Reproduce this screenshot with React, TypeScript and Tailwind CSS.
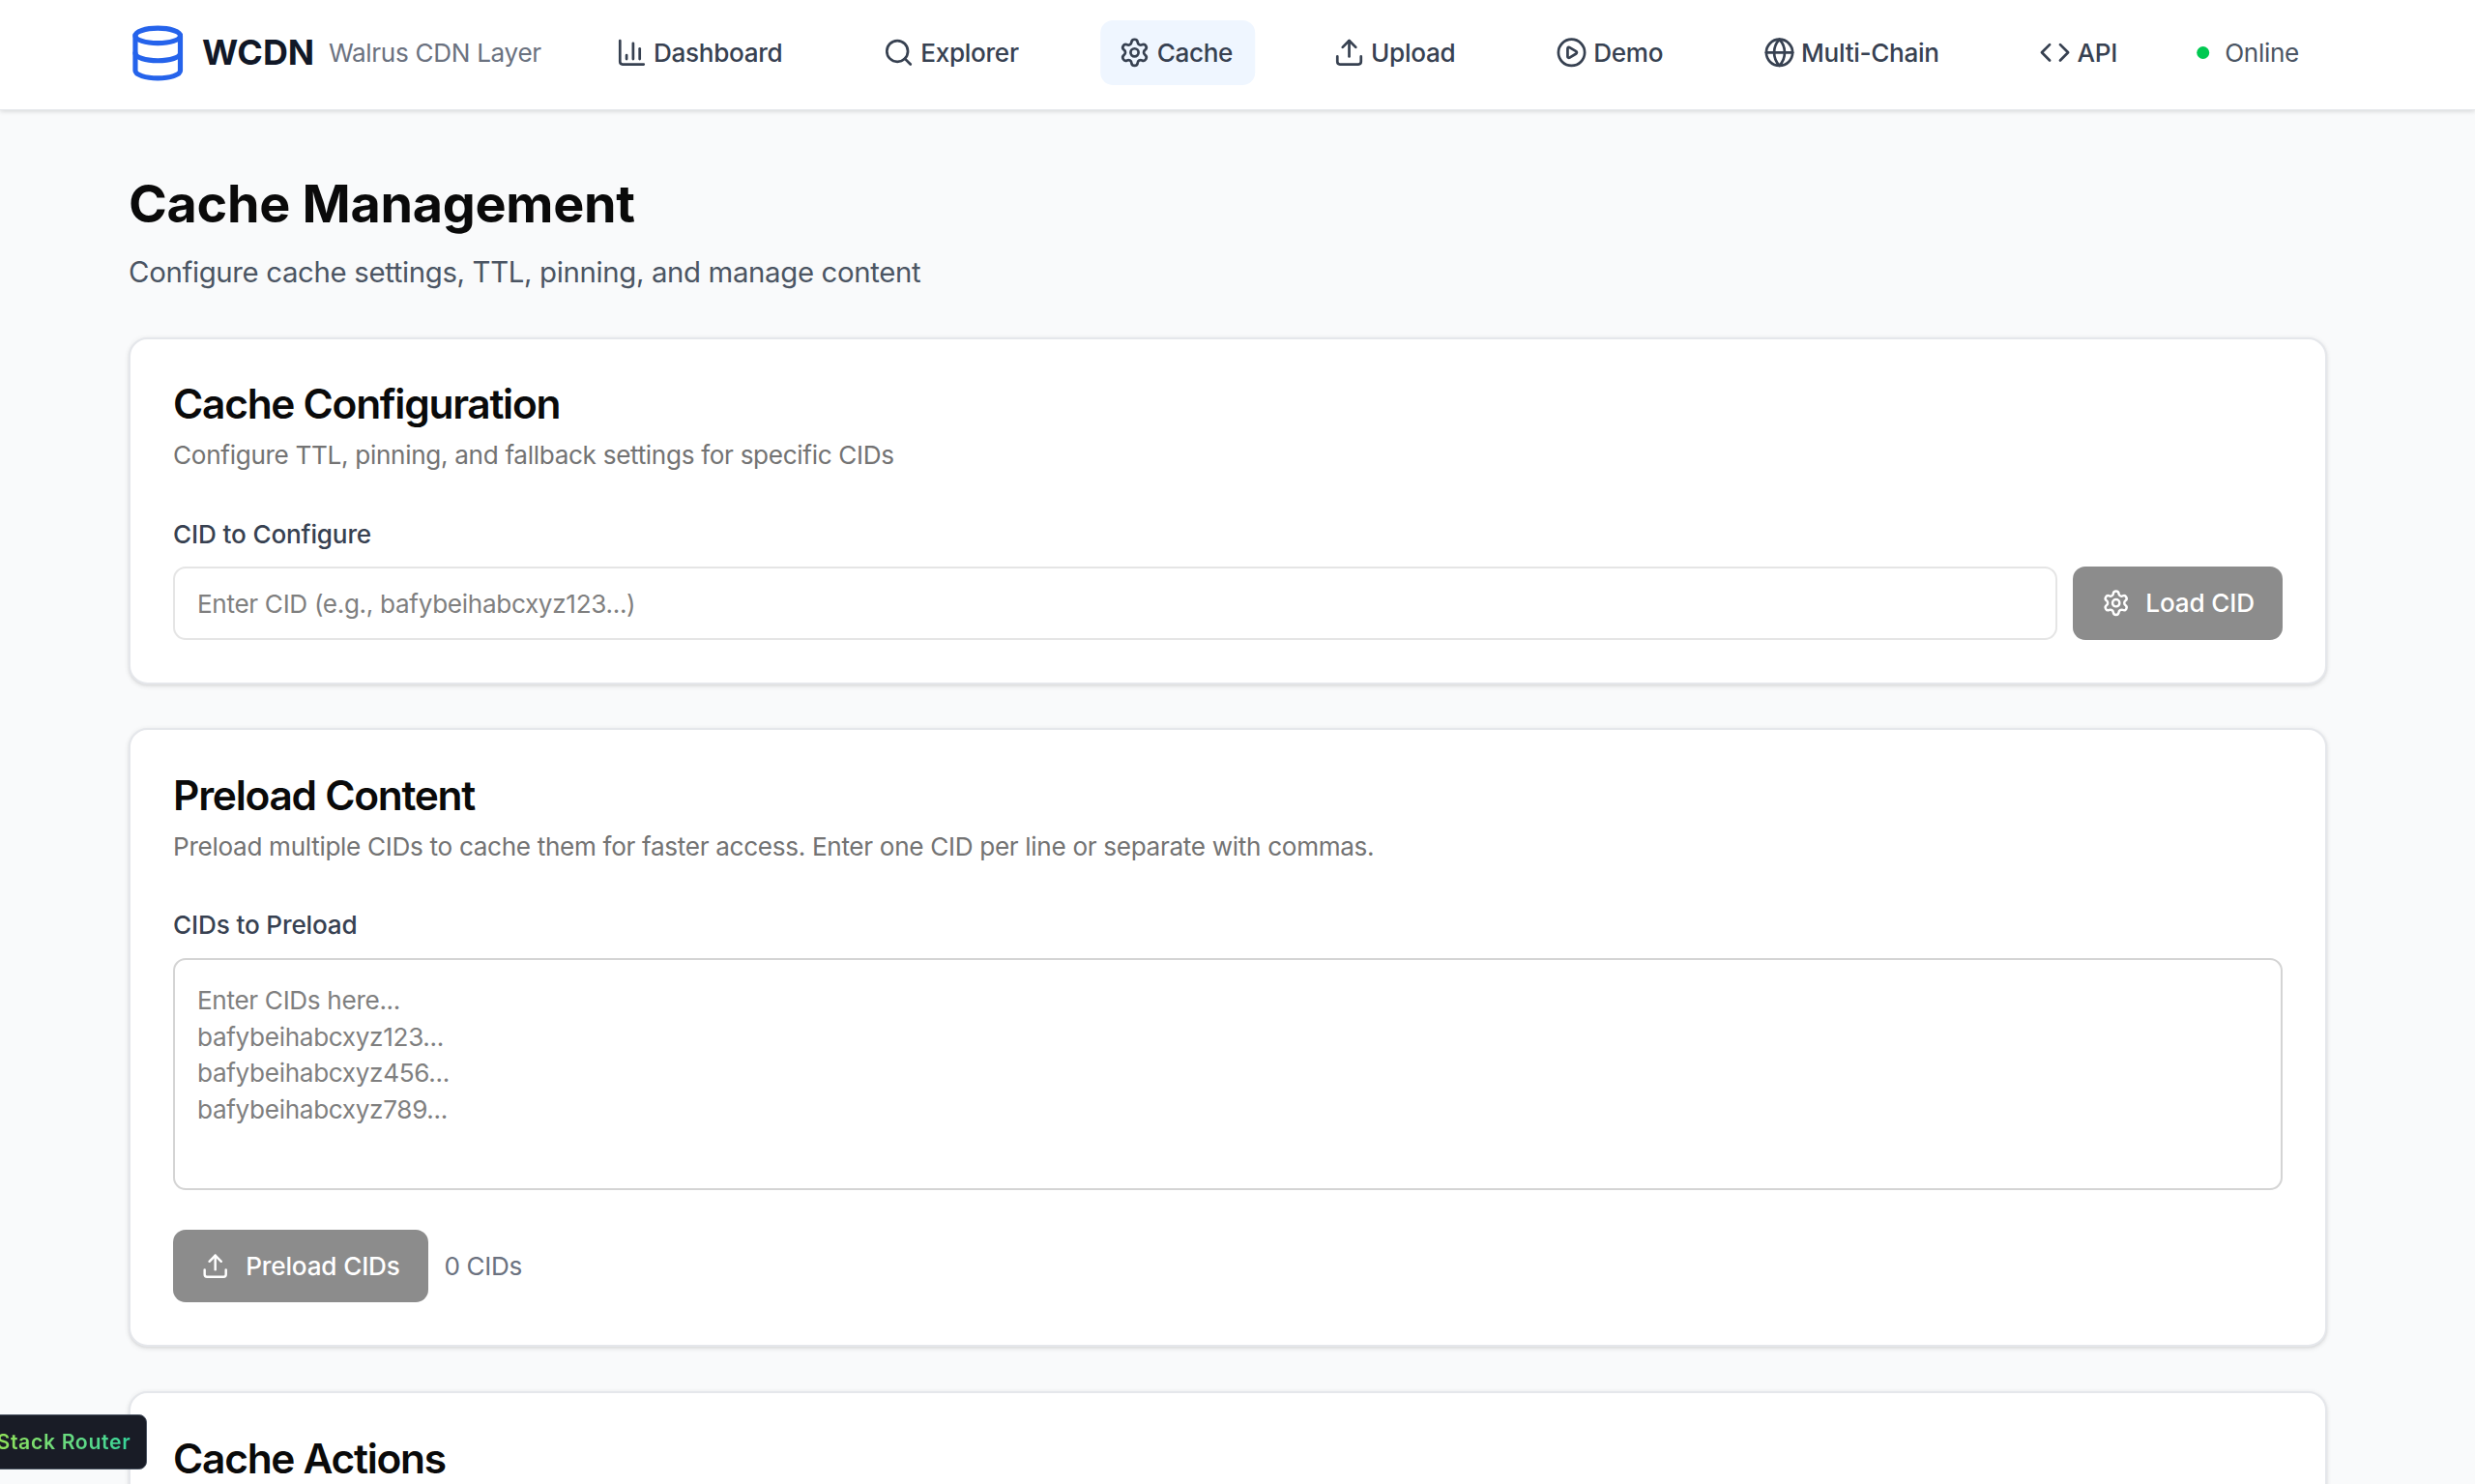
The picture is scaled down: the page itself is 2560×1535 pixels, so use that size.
import React from "react";
import { ChartColumn, Database, Search, Settings, Upload, CirclePlay, Globe, Code } from "lucide-react";

const navItems = [
  { label: "Dashboard", Icon: ChartColumn, active: false },
  { label: "Explorer", Icon: Search, active: false },
  { label: "Cache", Icon: Settings, active: true },
  { label: "Upload", Icon: Upload, active: false },
  { label: "Demo", Icon: CirclePlay, active: false },
  { label: "Multi-Chain", Icon: Globe, active: false },
  { label: "API", Icon: Code, active: false },
];

function CardHead({ title, desc }: { title: string; desc?: string }) {
  return (
    <div>
      <h2 className="text-[26px] leading-[26px] font-semibold tracking-[-0.03em] text-[#0a0a0a]">{title}</h2>
      {desc ? <p className="mt-[7px] text-base leading-6 tracking-[-0.012em] text-[#737373]">{desc}</p> : null}
    </div>
  );
}

function GrayButton({ label, Icon }: { label: string; Icon: typeof Upload }) {
  return (
    <button className="flex h-[46px] items-center gap-[10px] rounded-lg bg-[#8c8c8c] px-[18px] text-base font-medium tracking-[-0.006em] text-white">
      <Icon size={18} />
      {label}
    </button>
  );
}

export default function App() {
  return (
    <div className="relative h-[941px] overflow-hidden bg-[#f9fafb] font-['Inter',sans-serif] [zoom:1.6327]">
      <header className="h-[70px] border-b border-[#e5e7eb] bg-white pt-[13px] shadow-[0_1px_3px_rgba(0,0,0,0.14)]">
        <div className="mx-auto flex w-[1392px] -translate-x-[6px] items-center justify-between">
          <div className="flex items-center">
            <Database size={38} className="ml-[-1px] text-[#2563eb]" />
            <span className="ml-[9px] text-[22px] font-bold leading-[28px] text-[#111827]">WCDN</span>
            <span className="ml-[9px] text-base tracking-[-0.012em] text-[#6b7280]">Walrus CDN Layer</span>
          </div>
          <nav className="flex items-center gap-[37.6px] pr-[17.5px]">
            {navItems.map(({ label, Icon, active }) => (
              <a
                key={label}
                className={
                  active
                    ? "flex h-[41px] items-center gap-1 rounded-lg bg-[#eff6ff] pl-3 pr-[14px] text-base font-medium tracking-[-0.012em] text-[#374151]"
                    : "flex h-[41px] items-center gap-1 rounded-lg pl-3 pr-[14px] text-base font-medium tracking-[-0.012em] text-[#374151]"
                }
              >
                <Icon size={20} />
                {label}
              </a>
            ))}
            <div className="ml-[-1.5px] flex items-center gap-[10px] text-base tracking-[-0.012em] text-[#4b5563]">
              <span className="h-2 w-2 rounded-full bg-green-500" />
              Online
            </div>
          </nav>
        </div>
      </header>

      <main className="pr-3 pt-[39px]">
        <div className="mx-auto w-[1393px]">
          <h1 className="text-[33px] leading-10 font-bold tracking-[-0.005em] text-[#0a0a0a]">Cache Management</h1>
          <p className="mt-[9.5px] text-lg tracking-[-0.012em] text-[#4b5563]">Configure cache settings, TTL, pinning, and manage content</p>

          <section className="mt-[27.5px] rounded-xl border-[1.25px] border-[#e5e7eb] bg-white px-[27px] pb-[27px] pt-7 shadow-sm">
            <CardHead title="Cache Configuration" desc="Configure TTL, pinning, and fallback settings for specific CIDs" />
            <label className="mt-[26px] block text-base font-medium leading-6 tracking-[-0.006em] text-[#374151]">CID to Configure</label>
            <div className="mt-[9px] flex gap-[10px]">
              <input
                className="h-[46px] flex-1 rounded-lg border-[1.25px] border-[#e5e5e5] bg-white px-[14px] text-base tracking-[-0.012em] outline-none placeholder:text-[#7f7f7f]"
                placeholder="Enter CID (e.g., bafybeihabcxyz123...)"
              />
              <GrayButton label="Load CID" Icon={Settings} />
            </div>
          </section>

          <section className="mt-7 rounded-xl border-[1.25px] border-[#e5e7eb] bg-white px-[27px] pb-[27px] pt-[28.5px] shadow-sm">
            <CardHead title="Preload Content" desc="Preload multiple CIDs to cache them for faster access. Enter one CID per line or separate with commas." />
            <label className="mt-[26px] block text-base font-medium leading-6 tracking-[-0.006em] text-[#374151]">CIDs to Preload</label>
            <textarea
              className="mt-[9px] block h-[147px] w-full resize-none rounded-lg border-[1.25px] border-[#d4d4d4] bg-white px-[14px] py-[14px] text-base leading-[23px] tracking-[-0.012em] outline-none placeholder:text-[#7f7f7f]"
              placeholder={"Enter CIDs here...\nbafybeihabcxyz123...\nbafybeihabcxyz456...\nbafybeihabcxyz789..."}
            />
            <div className="mt-[25px] flex items-center gap-[10px]">
              <GrayButton label="Preload CIDs" Icon={Upload} />
              <span className="text-base tracking-[-0.012em] text-[#6b7280]">0 CIDs</span>
            </div>
          </section>

          <section className="mt-7 rounded-xl border-[1.25px] border-[#e5e7eb] bg-white px-[27px] pb-[27px] pt-[29px] shadow-sm">
            <CardHead title="Cache Actions" />
          </section>
        </div>
      </main>

      <button className="absolute left-[-36px] top-[896px] flex h-[35px] items-center whitespace-nowrap rounded-[5px] border border-[#4b5563] bg-[#191c26] pl-[9px] pr-[9.5px] text-[13px] font-semibold tracking-[0.03em]">
        <span className="bg-gradient-to-r from-[#a3e635] to-[#34d399] bg-clip-text text-transparent">TanStack Router</span>
      </button>
    </div>
  );
}
